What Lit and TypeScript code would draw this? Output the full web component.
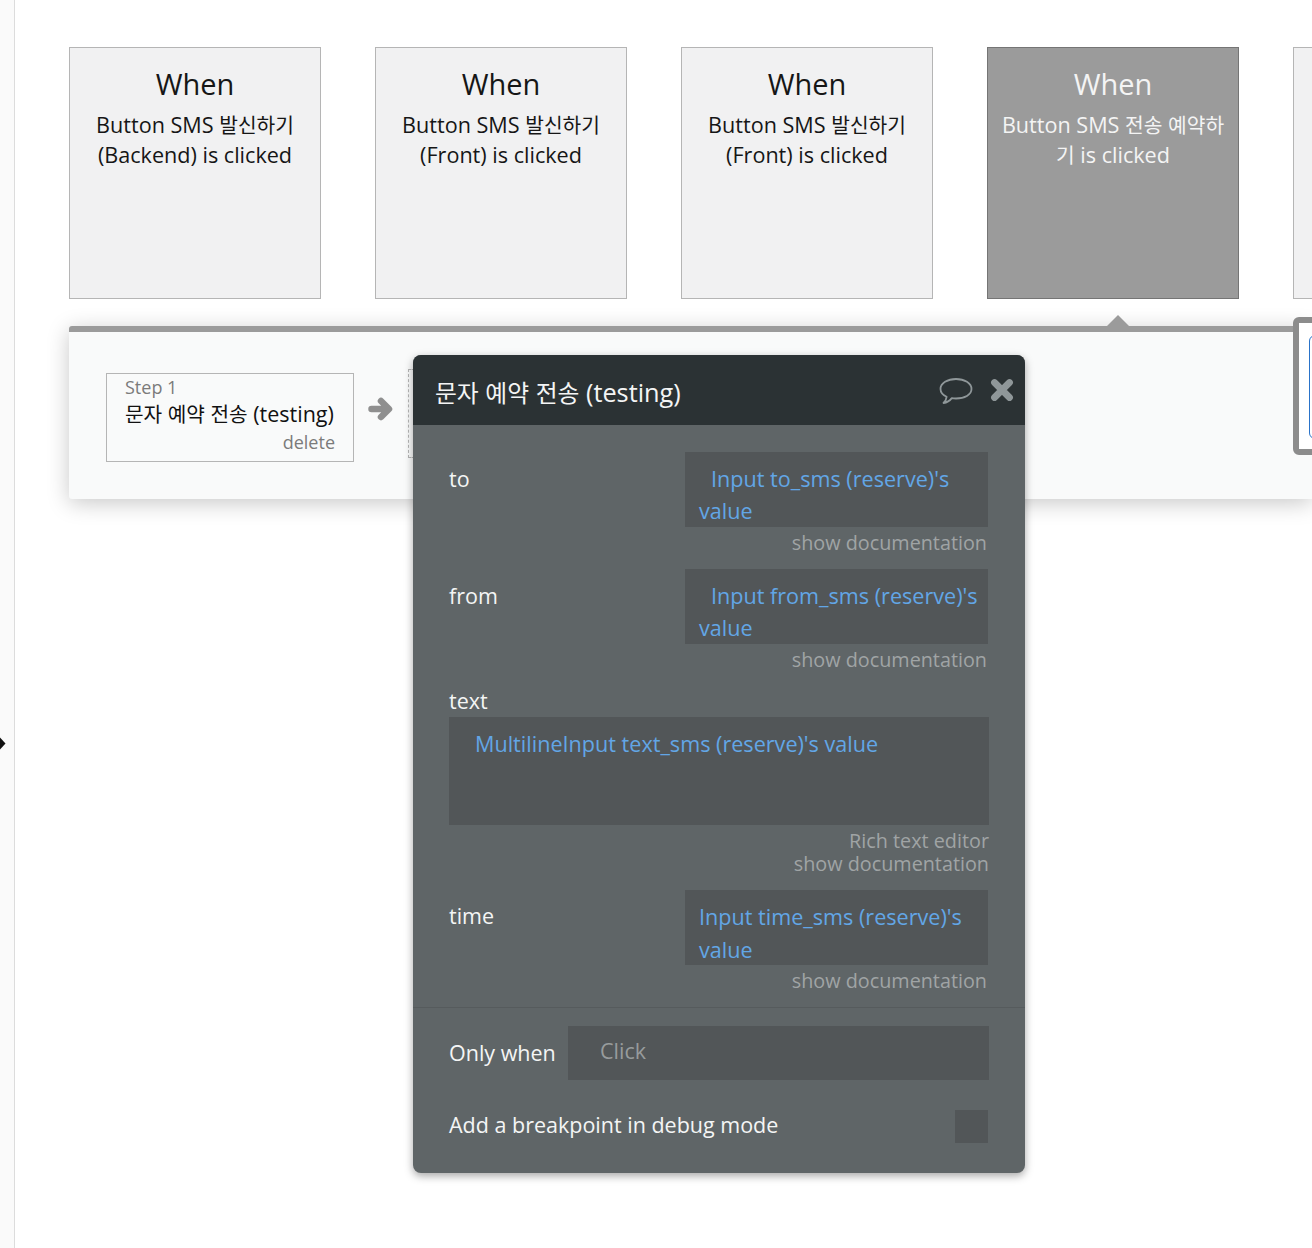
import { LitElement, html, css } from "lit";
import { customElement } from "lit/decorators.js";

const CARDS = [
  ["Button SMS 발신하기", "(Backend) is clicked", false],
  ["Button SMS 발신하기", "(Front) is clicked", false],
  ["Button SMS 발신하기", "(Front) is clicked", false],
  ["Button SMS 전송 예약하", "기 is clicked", true],
] as const;

/* Hangul runs are set slightly smaller than the Latin around them. */
const ko = (text: string) =>
  text.split(/([\uac00-\ud7a3]+)/).map((part, i) => (i % 2 ? html`<span class="ko">${part}</span>` : part));

@customElement("app-root")
export class AppRoot extends LitElement {
  static styles = css`
    :host {
      display: block;
      width: 1312px;
      height: 1248px;
      overflow: hidden;
      position: relative;
      background: #fff;
      font-family: "Open Sans", "Noto Sans CJK KR", sans-serif;
      color: #161616;
    }
    * { box-sizing: border-box; }
    .ko { font-size: 0.94em; }
    .rail {
      position: absolute; left: 0; top: 0; bottom: 0; width: 15px;
      background: #fafafa; border-right: 1px solid #dcdcdc;
    }
    .pointer { position: absolute; left: 0; top: 737px; }
    .canvas { padding: 47px 0 0 69px; width: 1312px; }
    .cards { display: flex; gap: 54px; width: 1400px; }
    .card {
      width: 252px; height: 252px; flex: none;
      background: #f1f1f2; border: 1px solid #b5b5b5;
      text-align: center; padding-top: 17px;
      display: flex; flex-direction: column; align-items: center;
    }
    .card.active { background: #9b9b9b; border-color: #757575; color: #f4f4f4; }
    .when { font-size: 29px; line-height: 38px; }
    .cond { font-size: 21.6px; line-height: 29px; margin-top: 7px; white-space: nowrap; }
    .flow {
      margin-top: 27px; height: 173px; width: 1243px;
      background: #f9fafa; border-top: 6px solid #9b9b9b; border-radius: 3px 0 0 3px;
      box-shadow: 0 4px 22px rgba(0,0,0,.22);
      position: relative; display: flex; align-items: flex-start;
      padding: 41px 0 0 37px;
    }
    .tip {
      position: absolute; left: 1037px; top: -17px; width: 24px; height: 12px; display: block;
    }
    .next {
      position: absolute; left: 1224px; top: -15px; width: 40px; height: 138px;
      background: #fff; border: 6px solid #8c8c8c; border-radius: 6px;
    }
    .next i {
      display: block; position: absolute; left: 10px; top: 12px; width: 40px; height: 104px;
      border: 1px solid #2a73c9; border-radius: 6px;
    }
    .step {
      width: 248px; height: 89px; flex: none; border: 1px solid #b5b5b5;
      padding: 1px 18px 0; display: flex; flex-direction: column;
    }
    .step .n { font-size: 18px; line-height: 24px; color: #7b7b7b; }
    .step .t { font-size: 21.5px; line-height: 30px; color: #111; white-space: nowrap; }
    .step .d { font-size: 18px; line-height: 24px; color: #7b7b7b; text-align: right; margin-top: 1px; }
    .arrow { flex: none; margin: 23px 0 0 14px; display: block; }
    .slot {
      flex: none; width: 10px; height: 89px; margin: -4px 0 0 15px;
      border: 1px dashed #b5b5b5; border-right: none;
    }
    .modal {
      position: absolute; left: 413px; top: 355px; width: 612px; height: 818px;
      background: #5f6567; border-radius: 8px; overflow: hidden;
      box-shadow: 0 3px 8px rgba(0,0,0,.35);
      display: flex; flex-direction: column; color: #f4f5f5;
    }
    .head {
      height: 70px; flex: none; background: #2b3234;
      display: flex; align-items: center; padding: 0 11px 0 22px;
      font-size: 25.3px;
    }
    .head .title { flex: 1; white-space: nowrap; padding-top: 2px; }
    .head svg { display: block; }
    .head .bubble { margin-right: 17px; margin-top: 2px; }
    .body { padding: 27px 36px 0; flex: none; }
    .row { display: flex; justify-content: space-between; height: 75px; }
    .label { font-size: 21.5px; line-height: 30px; margin-top: 12px; }
    .time .label { margin-top: 11px; }
    .dyn {
      width: 303px; height: 75px; background: #525658; color: #62a6e6;
      padding: 11px 8px 0 14px; font-size: 21.6px; line-height: 32px; margin-right: 1px;
    }
    .dyn.ind { text-indent: 12px; }
    .time .dyn { padding-top: 10px; line-height: 33px; }
    .doc { font-size: 19.8px; line-height: 26px; color: #a0a4a5; text-align: right; padding-right: 2px; margin-top: 3px; }
    .block { margin-bottom: 13px; }
    .tlabel { font-size: 21.5px; line-height: 30px; margin-top: 12px; }
    .area {
      height: 108px; background: #525658; color: #62a6e6; margin-top: 1px;
      padding: 11px 14px; font-size: 21.6px; line-height: 32px; text-indent: 12px;
    }
    .rich { font-size: 19.8px; line-height: 23px; color: #a0a4a5; text-align: right; margin-top: 4px; margin-bottom: 15px; }
    .divider { height: 1px; background: #565b5d; flex: none; }
    .foot { padding: 18px 36px 0; }
    .only { display: flex; align-items: center; height: 54px; font-size: 21.5px; }
    .only span { width: 119px; flex: none; white-space: nowrap; padding-bottom: 2px; }
    .only .inp {
      flex: 1; height: 54px; background: #525658; color: #989c9d; padding-left: 32px;
      line-height: 50px; font-size: 21.5px;
    }
    .bp { display: flex; justify-content: space-between; align-items: center; margin-top: 30px; height: 33px; font-size: 21.5px; }
    .bp span { padding-bottom: 4px; }
    .check { width: 33px; height: 33px; background: #525658; margin-right: 1px; }
  `;

  private row(label: string, value: string, indent: boolean, extra = "") {
    return html`<div class="block ${extra}">
      <div class="row">
        <div class="label">${label}</div>
        <div class="dyn ${indent ? "ind" : ""}">${value}</div>
      </div>
      <div class="doc">show documentation</div>
    </div>`;
  }

  render() {
    return html`
      <div class="rail"></div>
      <svg class="pointer" width="6" height="13" viewBox="0 0 6 13"><path d="M0 0.5 L5.5 6.5 L0 12.5Z" fill="#111"/></svg>
      <div class="canvas">
        <div class="cards">
          ${CARDS.map(([a, b, on]) => html`<div class="card ${on ? "active" : ""}">
            <div class="when">When</div>
            <div class="cond">${ko(a)}<br />${ko(b)}</div>
          </div>`)}
          <div class="card"></div>
        </div>
        <div class="flow">
          <svg class="tip" viewBox="0 0 24 12"><path d="M0 12 L12 0 L24 12Z" fill="#9b9b9b"/></svg>
          <div class="step">
            <div class="n">Step 1</div>
            <div class="t">${ko("문자 예약 전송 (testing)")}</div>
            <div class="d">delete</div>
          </div>
          <svg class="arrow" width="25" height="26" viewBox="0 0 25 26">
            <path d="M3.5 13 H20 M13 5 L21 13 L13 21" fill="none" stroke="#8f8f8f" stroke-width="6.5" stroke-linecap="round" stroke-linejoin="round"/>
          </svg>
          <div class="slot"></div>
          <div class="next"><i></i></div>
        </div>
      </div>
      <div class="modal">
        <div class="head">
          <div class="title">${ko("문자 예약 전송 (testing)")}</div>
          <svg class="bubble" width="34" height="28" viewBox="0 0 34 28">
            <path d="M17 2 C25.5 2 32.5 6.2 32.5 12 C32.5 17.8 25.5 21.5 17 21.5 C15.5 21.5 14 21.4 12.8 21.1 C11 23.5 8.5 25.5 4.5 26 C6.3 24.2 7.4 22 7.6 19.8 C3.9 18 1.5 15.3 1.5 12 C1.5 6.2 8.5 2 17 2Z" fill="none" stroke="#8f9799" stroke-width="1.8" stroke-linejoin="round"/>
          </svg>
          <svg width="24" height="24" viewBox="0 0 24 24">
            <path d="M4.5 4.5 L19.5 19.5 M19.5 4.5 L4.5 19.5" fill="none" stroke="#8f9799" stroke-width="6.8" stroke-linecap="round"/>
          </svg>
        </div>
        <div class="body">
          ${this.row("to", "Input to_sms (reserve)'s value", true)}
          ${this.row("from", "Input from_sms (reserve)'s value", true)}
          <div class="tlabel">text</div>
          <div class="area">MultilineInput text_sms (reserve)'s value</div>
          <div class="rich">Rich text editor<br />show documentation</div>
          ${this.row("time", "Input time_sms (reserve)'s value", false, "time")}
        </div>
        <div class="divider"></div>
        <div class="foot">
          <div class="only"><span>Only when</span><div class="inp">Click</div></div>
          <div class="bp"><span>Add a breakpoint in debug mode</span><div class="check"></div></div>
        </div>
      </div>
    `;
  }
}
